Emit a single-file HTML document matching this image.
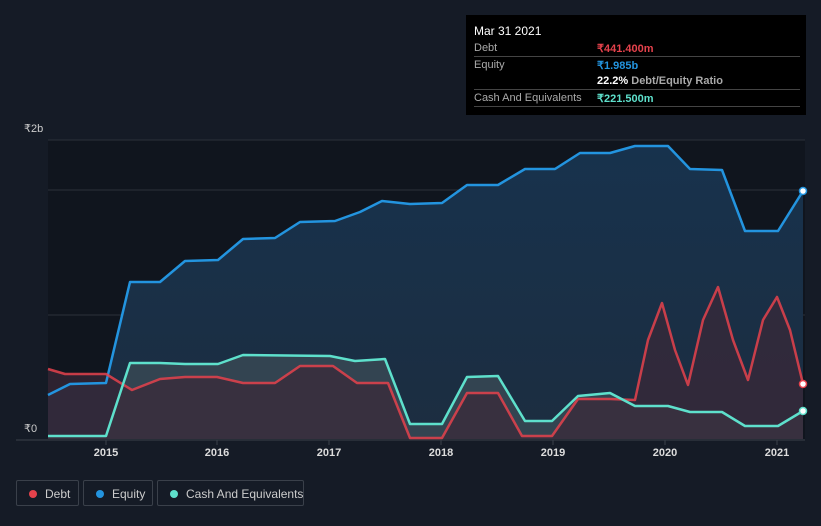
<!DOCTYPE html>
<html><head><meta charset="utf-8"><style>
body{margin:0;width:821px;height:526px;background:#151b26;font-family:"Liberation Sans",sans-serif;overflow:hidden;position:relative}
.tt{position:absolute;left:466px;top:15px;width:340px;height:100px;background:#000;color:#aaa;font-size:11px}
.tt .r{position:absolute;left:8px;right:6px;border-bottom:1px solid #444;height:16px}
.tt span{position:absolute;left:0;top:2px}
.tt b{position:absolute;left:123px;top:2px;font-weight:bold;white-space:nowrap}
.lg{position:absolute;top:480px;height:26px;border:1px solid #3a404a;border-radius:2px;color:#ccc;font-size:12px;line-height:26px;box-sizing:border-box;white-space:nowrap}
.lg i{position:absolute;left:12px;top:9px;width:8px;height:8px;border-radius:50%}
.lg span{position:absolute;left:28px;top:0;white-space:nowrap}
.yr{position:absolute;top:447px;color:#ddd;font-size:11px;font-weight:bold;width:40px;text-align:center}
</style></head><body>
<svg width="821" height="526" style="position:absolute;left:0;top:0">
<defs><linearGradient id="eg" x1="0" y1="0" x2="0" y2="1"><stop offset="0" stop-color="#17324d"/><stop offset="1" stop-color="#1c2d40"/></linearGradient></defs>
<rect x="48" y="140" width="757" height="299" fill="#10151e"/>
<line x1="48" y1="140" x2="805" y2="140" stroke="#2b313b"/>
<line x1="48" y1="190" x2="805" y2="190" stroke="#2b313b"/>
<line x1="48" y1="315" x2="805" y2="315" stroke="#2b313b"/>
<polygon fill="url(#eg)" points="48,439 48,395 70,384 106,383 130,282 160,282 185,261 218,260 243,239 275,238 300,222 335,221 360,212 382,201 410,204 442,203 467,185 498,185 525,169 555,169 580,153 610,153 635,146 668,146 690,169 722,170 745,231 778,231 803,191 803,439"/>
<polygon fill="#3a4a55" opacity="0.8" points="48,439 48,436 106,436 130,363 160,363 185,364 218,364 243,355 330,356 355,361 385,359 410,424 442,424 467,377 498,376 525,421 552,421 578,396 610,393 635,406 668,406 690,412 722,412 745,426 778,426 803,411 803,439"/>
<polygon fill="#3a2838" opacity="0.7" points="48,439 48,369 65,374 106,374 132,390 160,379 185,377 217,377 243,383 275,383 300,366 333,366 357,383 388,383 410,438 442,438 467,393 498,393 522,436 552,436 578,399 610,399 635,400 648,340 662,303 675,350 688,385 703,320 718,287 733,340 748,380 763,320 777,297 790,330 803,384 803,439"/>
<polyline fill="none" stroke="#2394df" stroke-width="2.5" stroke-linejoin="round" points="48,395 70,384 106,383 130,282 160,282 185,261 218,260 243,239 275,238 300,222 335,221 360,212 382,201 410,204 442,203 467,185 498,185 525,169 555,169 580,153 610,153 635,146 668,146 690,169 722,170 745,231 778,231 803,191"/>
<polyline fill="none" stroke="#e5424c" stroke-width="2.5" stroke-linejoin="round" opacity="0.85" points="48,369 65,374 106,374 132,390 160,379 185,377 217,377 243,383 275,383 300,366 333,366 357,383 388,383 410,438 442,438 467,393 498,393 522,436 552,436 578,399 610,399 635,400 648,340 662,303 675,350 688,385 703,320 718,287 733,340 748,380 763,320 777,297 790,330 803,384"/>
<polyline fill="none" stroke="#5ee0cc" stroke-width="2.5" stroke-linejoin="round" points="48,436 106,436 130,363 160,363 185,364 218,364 243,355 330,356 355,361 385,359 410,424 442,424 467,377 498,376 525,421 552,421 578,396 610,393 635,406 668,406 690,412 722,412 745,426 778,426 803,411"/>
<line x1="16" y1="440" x2="805" y2="440" stroke="#3a404a"/>
<g stroke="#3a404a"><line x1="106" y1="440" x2="106" y2="445"/><line x1="217" y1="440" x2="217" y2="445"/><line x1="329" y1="440" x2="329" y2="445"/><line x1="441" y1="440" x2="441" y2="445"/><line x1="553" y1="440" x2="553" y2="445"/><line x1="665" y1="440" x2="665" y2="445"/><line x1="777" y1="440" x2="777" y2="445"/></g>
<circle cx="803" cy="191" r="3.5" fill="#fff" stroke="#2394df" stroke-width="1.5"/>
<circle cx="803" cy="384" r="3.5" fill="#fff" stroke="#e5424c" stroke-width="1.5"/>
<circle cx="803" cy="411" r="3.5" fill="#fff" stroke="#5ee0cc" stroke-width="1.5"/>
</svg>
<div style="position:absolute;left:24px;top:122px;color:#ccc;font-size:11px">₹2b</div>
<div style="position:absolute;left:24px;top:422px;color:#ccc;font-size:11px">₹0</div>
<div class="yr" style="left:86px">2015</div><div class="yr" style="left:197px">2016</div><div class="yr" style="left:309px">2017</div><div class="yr" style="left:421px">2018</div><div class="yr" style="left:533px">2019</div><div class="yr" style="left:645px">2020</div><div class="yr" style="left:757px">2021</div>
<div class="tt">
<div style="position:absolute;left:8px;top:9px;color:#fff;font-size:12px">Mar 31 2021</div>
<div class="r" style="top:25px"><span>Debt</span><b style="color:#e5424c">₹441.400m</b></div>
<div class="r" style="top:42px;border:0"><span>Equity</span><b style="color:#2394df">₹1.985b</b></div>
<div class="r" style="top:58px"><b style="color:#fff">22.2% <span style="position:static;color:#aaa">Debt/Equity Ratio</span></b></div>
<div class="r" style="top:75px"><span>Cash And Equivalents</span><b style="color:#5ee0cc">₹221.500m</b></div>
</div>
<div class="lg" style="left:16px;width:63px"><i style="background:#e5424c"></i><span>Debt</span></div>
<div class="lg" style="left:83px;width:70px"><i style="background:#2394df"></i><span>Equity</span></div>
<div class="lg" style="left:157px;width:147px"><i style="background:#5ee0cc"></i><span>Cash And Equivalents</span></div>
</body></html>
